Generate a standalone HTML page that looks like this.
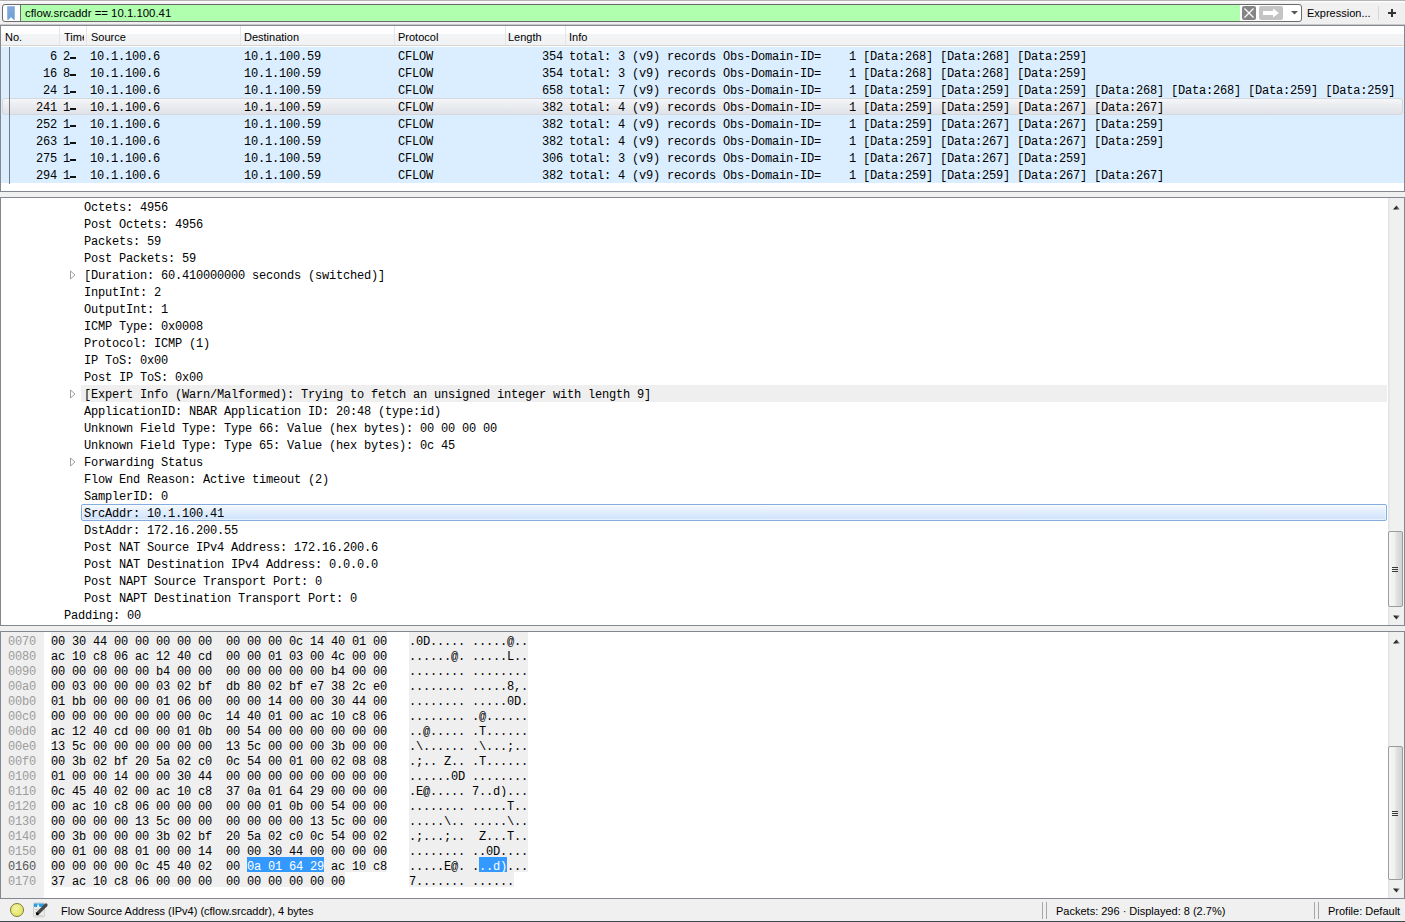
<!DOCTYPE html>
<html><head><meta charset="utf-8"><title>Wireshark</title><style>
*{margin:0;padding:0;box-sizing:border-box}
html,body{width:1405px;height:922px;overflow:hidden;background:#f0f0f0;position:relative;font-family:"Liberation Sans", sans-serif;}
.a{position:absolute}
.m{position:absolute;font-family:"Liberation Mono", monospace;font-size:12px;letter-spacing:-0.2px;white-space:pre;color:#000;line-height:17px}
.s{position:absolute;font-family:"Liberation Sans", sans-serif;font-size:11px;white-space:pre;color:#000;line-height:14px}
</style></head>
<body>
<div class="a" style="left:0;top:0;width:1405px;height:1px;background:#b4b4b4"></div>
<div class="a" style="left:0;top:1px;width:1405px;height:1px;background:#fdfdfd"></div>
<div class="a" style="left:0;top:2px;width:1405px;height:1px;background:#f6f6f6"></div>
<div class="a" style="left:2px;top:4px;width:1300px;height:18px;border:1px solid #6b6b6b;border-radius:3px;background:#fff"></div>
<div class="a" style="left:20px;top:5px;width:1px;height:16px;background:#6b6b6b"></div>
<div class="a" style="left:21px;top:5px;width:1219px;height:16px;background:#afffaf"></div>
<svg class="a" style="left:6px;top:5px" width="10" height="16" viewBox="0 0 10 16"><defs><linearGradient id="bm" x1="0" y1="0" x2="0.3" y2="1"><stop offset="0" stop-color="#86addb"/><stop offset="1" stop-color="#6c9fd4"/></linearGradient></defs><path d="M1.5 1.5 H8.5 V14.5 H7.5 L5 11.8 L2.5 14.5 H1.5 Z" fill="url(#bm)" stroke="#74a2d6" stroke-width="0.5"/></svg>
<div class="s" style="left:25px;top:6px;font-size:11.4px">cflow.srcaddr == 10.1.100.41</div>
<div class="a" style="left:1242px;top:6px;width:14px;height:14px;background:#848484;border-radius:2px"></div>
<svg class="a" style="left:1242px;top:6px" width="14" height="14" viewBox="0 0 14 14"><path d="M2.5 2.5 L11.5 11.5 M11.5 2.5 L2.5 11.5" stroke="#fff" stroke-width="1.2"/></svg>
<div class="a" style="left:1259px;top:6px;width:24px;height:14px;background:#c4c4c4;border-radius:2px"></div>
<svg class="a" style="left:1259px;top:6px" width="24" height="14" viewBox="0 0 24 14"><path d="M4 5 H14 V2.5 L20 7 L14 11.5 V9 H4 Z" fill="#fff"/></svg>
<svg class="a" style="left:1291px;top:11px" width="7" height="4" viewBox="0 0 7 4"><path d="M0 0 H7 L3.5 3.5 Z" fill="#555"/></svg>
<div class="s" style="left:1307px;top:6px">Expression...</div>
<div class="a" style="left:1378px;top:6px;width:1px;height:14px;background:#d8d8d8"></div>
<svg class="a" style="left:1387px;top:8px" width="10" height="10" viewBox="0 0 10 10"><path d="M5 1 V9 M1 5 H9" stroke="#333" stroke-width="2"/></svg>
<div class="a" style="left:0;top:24px;width:1405px;height:1px;background:#c8c8c8"></div>
<div class="a" style="left:0;top:25px;width:1405px;height:167px;border:1px solid #828790;background:#fff"></div>
<div class="a" style="left:1px;top:26px;width:1403px;height:19px;background:linear-gradient(#ffffff 0,#ffffff 8px,#f3f4f6 8px,#f1f2f4 19px)"></div>
<div class="a" style="left:1px;top:45px;width:1403px;height:1px;background:#d5d5d5"></div>
<div class="a" style="left:59px;top:26px;width:1px;height:19px;background:#e3e5e8"></div>
<div class="a" style="left:86px;top:26px;width:1px;height:19px;background:#e3e5e8"></div>
<div class="a" style="left:240px;top:26px;width:1px;height:19px;background:#e3e5e8"></div>
<div class="a" style="left:394px;top:26px;width:1px;height:19px;background:#e3e5e8"></div>
<div class="a" style="left:505px;top:26px;width:1px;height:19px;background:#e3e5e8"></div>
<div class="a" style="left:565px;top:26px;width:1px;height:19px;background:#e3e5e8"></div>
<div class="s" style="left:5px;top:30px">No.</div>
<div class="s" style="left:64px;top:30px;width:20px;overflow:hidden">Time</div>
<div class="s" style="left:91px;top:30px">Source</div>
<div class="s" style="left:244px;top:30px">Destination</div>
<div class="s" style="left:398px;top:30px">Protocol</div>
<div class="s" style="left:508px;top:30px">Length</div>
<div class="s" style="left:569px;top:30px">Info</div>
<div class="a" style="left:1px;top:47px;width:1403px;height:136px;background:#daeeff"></div>
<div class="a" style="left:2px;top:98px;width:1401px;height:17px;border:1px solid #d5d7da;border-radius:3px;background:linear-gradient(#f5f6f9,#e9ebef 50%,#dfe2e8)"></div>
<div class="a" style="left:9px;top:47px;width:1px;height:137px;background:#767b82"></div>
<div class="m" style="left:50px;top:49px">6</div>
<div class="m" style="left:63px;top:49px">2</div>
<div class="a" style="left:70px;top:57px;width:6px;height:2px;background:#111"></div>
<div class="m" style="left:90px;top:49px">10.1.100.6</div>
<div class="m" style="left:244px;top:49px">10.1.100.59</div>
<div class="m" style="left:398px;top:49px">CFLOW</div>
<div class="m" style="left:542px;top:49px">354</div>
<div class="m" style="left:569px;top:49px">total: 3 (v9) records Obs-Domain-ID=    1 [Data:268] [Data:268] [Data:259]</div>
<div class="m" style="left:43px;top:66px">16</div>
<div class="m" style="left:63px;top:66px">8</div>
<div class="a" style="left:70px;top:74px;width:6px;height:2px;background:#111"></div>
<div class="m" style="left:90px;top:66px">10.1.100.6</div>
<div class="m" style="left:244px;top:66px">10.1.100.59</div>
<div class="m" style="left:398px;top:66px">CFLOW</div>
<div class="m" style="left:542px;top:66px">354</div>
<div class="m" style="left:569px;top:66px">total: 3 (v9) records Obs-Domain-ID=    1 [Data:268] [Data:268] [Data:259]</div>
<div class="m" style="left:43px;top:83px">24</div>
<div class="m" style="left:63px;top:83px">1</div>
<div class="a" style="left:70px;top:91px;width:6px;height:2px;background:#111"></div>
<div class="m" style="left:90px;top:83px">10.1.100.6</div>
<div class="m" style="left:244px;top:83px">10.1.100.59</div>
<div class="m" style="left:398px;top:83px">CFLOW</div>
<div class="m" style="left:542px;top:83px">658</div>
<div class="m" style="left:569px;top:83px">total: 7 (v9) records Obs-Domain-ID=    1 [Data:259] [Data:259] [Data:259] [Data:268] [Data:268] [Data:259] [Data:259]</div>
<div class="m" style="left:36px;top:100px">241</div>
<div class="m" style="left:63px;top:100px">1</div>
<div class="a" style="left:70px;top:108px;width:6px;height:2px;background:#111"></div>
<div class="m" style="left:90px;top:100px">10.1.100.6</div>
<div class="m" style="left:244px;top:100px">10.1.100.59</div>
<div class="m" style="left:398px;top:100px">CFLOW</div>
<div class="m" style="left:542px;top:100px">382</div>
<div class="m" style="left:569px;top:100px">total: 4 (v9) records Obs-Domain-ID=    1 [Data:259] [Data:259] [Data:267] [Data:267]</div>
<div class="m" style="left:36px;top:117px">252</div>
<div class="m" style="left:63px;top:117px">1</div>
<div class="a" style="left:70px;top:125px;width:6px;height:2px;background:#111"></div>
<div class="m" style="left:90px;top:117px">10.1.100.6</div>
<div class="m" style="left:244px;top:117px">10.1.100.59</div>
<div class="m" style="left:398px;top:117px">CFLOW</div>
<div class="m" style="left:542px;top:117px">382</div>
<div class="m" style="left:569px;top:117px">total: 4 (v9) records Obs-Domain-ID=    1 [Data:259] [Data:267] [Data:267] [Data:259]</div>
<div class="m" style="left:36px;top:134px">263</div>
<div class="m" style="left:63px;top:134px">1</div>
<div class="a" style="left:70px;top:142px;width:6px;height:2px;background:#111"></div>
<div class="m" style="left:90px;top:134px">10.1.100.6</div>
<div class="m" style="left:244px;top:134px">10.1.100.59</div>
<div class="m" style="left:398px;top:134px">CFLOW</div>
<div class="m" style="left:542px;top:134px">382</div>
<div class="m" style="left:569px;top:134px">total: 4 (v9) records Obs-Domain-ID=    1 [Data:259] [Data:267] [Data:267] [Data:259]</div>
<div class="m" style="left:36px;top:151px">275</div>
<div class="m" style="left:63px;top:151px">1</div>
<div class="a" style="left:70px;top:159px;width:6px;height:2px;background:#111"></div>
<div class="m" style="left:90px;top:151px">10.1.100.6</div>
<div class="m" style="left:244px;top:151px">10.1.100.59</div>
<div class="m" style="left:398px;top:151px">CFLOW</div>
<div class="m" style="left:542px;top:151px">306</div>
<div class="m" style="left:569px;top:151px">total: 3 (v9) records Obs-Domain-ID=    1 [Data:267] [Data:267] [Data:259]</div>
<div class="m" style="left:36px;top:168px">294</div>
<div class="m" style="left:63px;top:168px">1</div>
<div class="a" style="left:70px;top:176px;width:6px;height:2px;background:#111"></div>
<div class="m" style="left:90px;top:168px">10.1.100.6</div>
<div class="m" style="left:244px;top:168px">10.1.100.59</div>
<div class="m" style="left:398px;top:168px">CFLOW</div>
<div class="m" style="left:542px;top:168px">382</div>
<div class="m" style="left:569px;top:168px">total: 4 (v9) records Obs-Domain-ID=    1 [Data:259] [Data:259] [Data:267] [Data:267]</div>
<div class="a" style="left:0;top:197px;width:1405px;height:429px;border:1px solid #828790;background:#fff"></div>
<div class="a" style="left:1388px;top:198px;width:16px;height:427px;background:linear-gradient(90deg,#e4e4e4 0,#e4e4e4 1px,#f0f0f0 2px)"></div>
<svg class="a" style="left:1393px;top:205px" width="8" height="5" viewBox="0 0 8 5"><defs><linearGradient id="ga198" x1="0" x2="1"><stop offset="0" stop-color="#111"/><stop offset="0.5" stop-color="#333"/><stop offset="1" stop-color="#aaa"/></linearGradient></defs><path d="M0 4.5 L3.5 0.5 L7 4.5 Z" fill="url(#ga198)"/></svg>
<svg class="a" style="left:1393px;top:615px" width="8" height="5" viewBox="0 0 8 5"><defs><linearGradient id="gb198" x1="0" x2="1"><stop offset="0" stop-color="#111"/><stop offset="0.5" stop-color="#333"/><stop offset="1" stop-color="#aaa"/></linearGradient></defs><path d="M0 0.5 L7 0.5 L3.5 4.5 Z" fill="url(#gb198)"/></svg>
<div class="a" style="left:1388px;top:531px;width:15px;height:76px;border:1px solid #9c9c9c;border-radius:2px;background:linear-gradient(90deg,#f6f6f6 0,#f0f0f0 45%,#e2e2e2 55%,#d2d2d2 100%)"></div>
<div class="a" style="left:1392px;top:567px;width:6px;height:1px;background:#3a3a3a"></div>
<div class="a" style="left:1392px;top:569px;width:6px;height:1px;background:#3a3a3a"></div>
<div class="a" style="left:1392px;top:571px;width:6px;height:1px;background:#3a3a3a"></div>
<div class="a" style="left:81px;top:385px;width:1306px;height:17px;background:#efefef"></div>
<div class="a" style="left:81px;top:504px;width:1306px;height:17px;border:1px solid #84acdd;border-radius:2px;background:linear-gradient(#f4f9fe,#e4effd 40%,#d3e6fc 85%,#cfe3fc);box-shadow:inset 0 0 0 1px rgba(255,255,255,0.5)"></div>
<div class="m" style="left:84px;top:200px">Octets: 4956</div>
<div class="m" style="left:84px;top:217px">Post Octets: 4956</div>
<div class="m" style="left:84px;top:234px">Packets: 59</div>
<div class="m" style="left:84px;top:251px">Post Packets: 59</div>
<svg class="a" style="left:69px;top:270px" width="8" height="10" viewBox="0 0 8 10"><path d="M1.5 1 L6 5 L1.5 9 Z" fill="none" stroke="#a0a0a0" stroke-width="1"/></svg>
<div class="m" style="left:84px;top:268px">[Duration: 60.410000000 seconds (switched)]</div>
<div class="m" style="left:84px;top:285px">InputInt: 2</div>
<div class="m" style="left:84px;top:302px">OutputInt: 1</div>
<div class="m" style="left:84px;top:319px">ICMP Type: 0x0008</div>
<div class="m" style="left:84px;top:336px">Protocol: ICMP (1)</div>
<div class="m" style="left:84px;top:353px">IP ToS: 0x00</div>
<div class="m" style="left:84px;top:370px">Post IP ToS: 0x00</div>
<svg class="a" style="left:69px;top:389px" width="8" height="10" viewBox="0 0 8 10"><path d="M1.5 1 L6 5 L1.5 9 Z" fill="none" stroke="#a0a0a0" stroke-width="1"/></svg>
<div class="m" style="left:84px;top:387px">[Expert Info (Warn/Malformed): Trying to fetch an unsigned integer with length 9]</div>
<div class="m" style="left:84px;top:404px">ApplicationID: NBAR Application ID: 20:48 (type:id)</div>
<div class="m" style="left:84px;top:421px">Unknown Field Type: Type 66: Value (hex bytes): 00 00 00 00</div>
<div class="m" style="left:84px;top:438px">Unknown Field Type: Type 65: Value (hex bytes): 0c 45</div>
<svg class="a" style="left:69px;top:457px" width="8" height="10" viewBox="0 0 8 10"><path d="M1.5 1 L6 5 L1.5 9 Z" fill="none" stroke="#a0a0a0" stroke-width="1"/></svg>
<div class="m" style="left:84px;top:455px">Forwarding Status</div>
<div class="m" style="left:84px;top:472px">Flow End Reason: Active timeout (2)</div>
<div class="m" style="left:84px;top:489px">SamplerID: 0</div>
<div class="m" style="left:84px;top:506px">SrcAddr: 10.1.100.41</div>
<div class="m" style="left:84px;top:523px">DstAddr: 172.16.200.55</div>
<div class="m" style="left:84px;top:540px">Post NAT Source IPv4 Address: 172.16.200.6</div>
<div class="m" style="left:84px;top:557px">Post NAT Destination IPv4 Address: 0.0.0.0</div>
<div class="m" style="left:84px;top:574px">Post NAPT Source Transport Port: 0</div>
<div class="m" style="left:84px;top:591px">Post NAPT Destination Transport Port: 0</div>
<div class="m" style="left:64px;top:608px">Padding: 00</div>
<div class="a" style="left:0;top:631px;width:1405px;height:268px;border:1px solid #828790;background:#fff"></div>
<div class="a" style="left:1px;top:632px;width:43px;height:266px;background:#efefef"></div>
<div class="a" style="left:1388px;top:632px;width:16px;height:266px;background:linear-gradient(90deg,#e4e4e4 0,#e4e4e4 1px,#f0f0f0 2px)"></div>
<svg class="a" style="left:1393px;top:639px" width="8" height="5" viewBox="0 0 8 5"><defs><linearGradient id="ga632" x1="0" x2="1"><stop offset="0" stop-color="#111"/><stop offset="0.5" stop-color="#333"/><stop offset="1" stop-color="#aaa"/></linearGradient></defs><path d="M0 4.5 L3.5 0.5 L7 4.5 Z" fill="url(#ga632)"/></svg>
<svg class="a" style="left:1393px;top:888px" width="8" height="5" viewBox="0 0 8 5"><defs><linearGradient id="gb632" x1="0" x2="1"><stop offset="0" stop-color="#111"/><stop offset="0.5" stop-color="#333"/><stop offset="1" stop-color="#aaa"/></linearGradient></defs><path d="M0 0.5 L7 0.5 L3.5 4.5 Z" fill="url(#gb632)"/></svg>
<div class="a" style="left:1388px;top:746px;width:15px;height:134px;border:1px solid #9c9c9c;border-radius:2px;background:linear-gradient(90deg,#f6f6f6 0,#f0f0f0 45%,#e2e2e2 55%,#d2d2d2 100%)"></div>
<div class="a" style="left:1392px;top:811px;width:6px;height:1px;background:#3a3a3a"></div>
<div class="a" style="left:1392px;top:813px;width:6px;height:1px;background:#3a3a3a"></div>
<div class="a" style="left:1392px;top:815px;width:6px;height:1px;background:#3a3a3a"></div>
<div class="m" style="left:8px;top:635px;line-height:15px;color:#9c9c9c">0070</div>
<div class="a" style="left:51px;top:632px;width:336px;height:15px;background:#efefef"></div>
<div class="a" style="left:409px;top:632px;width:119px;height:15px;background:#efefef"></div>
<div class="m" style="left:51px;top:635px;line-height:15px">00 30 44 00 00 00 00 00  00 00 00 0c 14 40 01 00</div>
<div class="m" style="left:409px;top:635px;line-height:15px">.0D..... .....@..</div>
<div class="m" style="left:8px;top:650px;line-height:15px;color:#9c9c9c">0080</div>
<div class="a" style="left:51px;top:647px;width:336px;height:15px;background:#efefef"></div>
<div class="a" style="left:409px;top:647px;width:119px;height:15px;background:#efefef"></div>
<div class="m" style="left:51px;top:650px;line-height:15px">ac 10 c8 06 ac 12 40 cd  00 00 01 03 00 4c 00 00</div>
<div class="m" style="left:409px;top:650px;line-height:15px">......@. .....L..</div>
<div class="m" style="left:8px;top:665px;line-height:15px;color:#9c9c9c">0090</div>
<div class="a" style="left:51px;top:662px;width:336px;height:15px;background:#efefef"></div>
<div class="a" style="left:409px;top:662px;width:119px;height:15px;background:#efefef"></div>
<div class="m" style="left:51px;top:665px;line-height:15px">00 00 00 00 00 b4 00 00  00 00 00 00 00 b4 00 00</div>
<div class="m" style="left:409px;top:665px;line-height:15px">........ ........</div>
<div class="m" style="left:8px;top:680px;line-height:15px;color:#9c9c9c">00a0</div>
<div class="a" style="left:51px;top:677px;width:336px;height:15px;background:#efefef"></div>
<div class="a" style="left:409px;top:677px;width:119px;height:15px;background:#efefef"></div>
<div class="m" style="left:51px;top:680px;line-height:15px">00 03 00 00 00 03 02 bf  db 80 02 bf e7 38 2c e0</div>
<div class="m" style="left:409px;top:680px;line-height:15px">........ .....8,.</div>
<div class="m" style="left:8px;top:695px;line-height:15px;color:#9c9c9c">00b0</div>
<div class="a" style="left:51px;top:692px;width:336px;height:15px;background:#efefef"></div>
<div class="a" style="left:409px;top:692px;width:119px;height:15px;background:#efefef"></div>
<div class="m" style="left:51px;top:695px;line-height:15px">01 bb 00 00 00 01 06 00  00 00 14 00 00 30 44 00</div>
<div class="m" style="left:409px;top:695px;line-height:15px">........ .....0D.</div>
<div class="m" style="left:8px;top:710px;line-height:15px;color:#9c9c9c">00c0</div>
<div class="a" style="left:51px;top:707px;width:336px;height:15px;background:#efefef"></div>
<div class="a" style="left:409px;top:707px;width:119px;height:15px;background:#efefef"></div>
<div class="m" style="left:51px;top:710px;line-height:15px">00 00 00 00 00 00 00 0c  14 40 01 00 ac 10 c8 06</div>
<div class="m" style="left:409px;top:710px;line-height:15px">........ .@......</div>
<div class="m" style="left:8px;top:725px;line-height:15px;color:#9c9c9c">00d0</div>
<div class="a" style="left:51px;top:722px;width:336px;height:15px;background:#efefef"></div>
<div class="a" style="left:409px;top:722px;width:119px;height:15px;background:#efefef"></div>
<div class="m" style="left:51px;top:725px;line-height:15px">ac 12 40 cd 00 00 01 0b  00 54 00 00 00 00 00 00</div>
<div class="m" style="left:409px;top:725px;line-height:15px">..@..... .T......</div>
<div class="m" style="left:8px;top:740px;line-height:15px;color:#9c9c9c">00e0</div>
<div class="a" style="left:51px;top:737px;width:336px;height:15px;background:#efefef"></div>
<div class="a" style="left:409px;top:737px;width:119px;height:15px;background:#efefef"></div>
<div class="m" style="left:51px;top:740px;line-height:15px">13 5c 00 00 00 00 00 00  13 5c 00 00 00 3b 00 00</div>
<div class="m" style="left:409px;top:740px;line-height:15px">.\...... .\...;..</div>
<div class="m" style="left:8px;top:755px;line-height:15px;color:#9c9c9c">00f0</div>
<div class="a" style="left:51px;top:752px;width:336px;height:15px;background:#efefef"></div>
<div class="a" style="left:409px;top:752px;width:119px;height:15px;background:#efefef"></div>
<div class="m" style="left:51px;top:755px;line-height:15px">00 3b 02 bf 20 5a 02 c0  0c 54 00 01 00 02 08 08</div>
<div class="m" style="left:409px;top:755px;line-height:15px">.;.. Z.. .T......</div>
<div class="m" style="left:8px;top:770px;line-height:15px;color:#9c9c9c">0100</div>
<div class="a" style="left:51px;top:767px;width:336px;height:15px;background:#efefef"></div>
<div class="a" style="left:409px;top:767px;width:119px;height:15px;background:#efefef"></div>
<div class="m" style="left:51px;top:770px;line-height:15px">01 00 00 14 00 00 30 44  00 00 00 00 00 00 00 00</div>
<div class="m" style="left:409px;top:770px;line-height:15px">......0D ........</div>
<div class="m" style="left:8px;top:785px;line-height:15px;color:#9c9c9c">0110</div>
<div class="a" style="left:51px;top:782px;width:336px;height:15px;background:#efefef"></div>
<div class="a" style="left:409px;top:782px;width:119px;height:15px;background:#efefef"></div>
<div class="m" style="left:51px;top:785px;line-height:15px">0c 45 40 02 00 ac 10 c8  37 0a 01 64 29 00 00 00</div>
<div class="m" style="left:409px;top:785px;line-height:15px">.E@..... 7..d)...</div>
<div class="m" style="left:8px;top:800px;line-height:15px;color:#9c9c9c">0120</div>
<div class="a" style="left:51px;top:797px;width:336px;height:15px;background:#efefef"></div>
<div class="a" style="left:409px;top:797px;width:119px;height:15px;background:#efefef"></div>
<div class="m" style="left:51px;top:800px;line-height:15px">00 ac 10 c8 06 00 00 00  00 00 01 0b 00 54 00 00</div>
<div class="m" style="left:409px;top:800px;line-height:15px">........ .....T..</div>
<div class="m" style="left:8px;top:815px;line-height:15px;color:#9c9c9c">0130</div>
<div class="a" style="left:51px;top:812px;width:336px;height:15px;background:#efefef"></div>
<div class="a" style="left:409px;top:812px;width:119px;height:15px;background:#efefef"></div>
<div class="m" style="left:51px;top:815px;line-height:15px">00 00 00 00 13 5c 00 00  00 00 00 00 13 5c 00 00</div>
<div class="m" style="left:409px;top:815px;line-height:15px">.....\.. .....\..</div>
<div class="m" style="left:8px;top:830px;line-height:15px;color:#9c9c9c">0140</div>
<div class="a" style="left:51px;top:827px;width:336px;height:15px;background:#efefef"></div>
<div class="a" style="left:409px;top:827px;width:119px;height:15px;background:#efefef"></div>
<div class="m" style="left:51px;top:830px;line-height:15px">00 3b 00 00 00 3b 02 bf  20 5a 02 c0 0c 54 00 02</div>
<div class="m" style="left:409px;top:830px;line-height:15px">.;...;..  Z...T..</div>
<div class="m" style="left:8px;top:845px;line-height:15px;color:#9c9c9c">0150</div>
<div class="a" style="left:51px;top:842px;width:336px;height:15px;background:#efefef"></div>
<div class="a" style="left:409px;top:842px;width:119px;height:15px;background:#efefef"></div>
<div class="m" style="left:51px;top:845px;line-height:15px">00 01 00 08 01 00 00 14  00 00 30 44 00 00 00 00</div>
<div class="m" style="left:409px;top:845px;line-height:15px">........ ..0D....</div>
<div class="m" style="left:8px;top:860px;line-height:15px;color:#555">0160</div>
<div class="a" style="left:51px;top:857px;width:336px;height:15px;background:#efefef"></div>
<div class="a" style="left:409px;top:857px;width:119px;height:15px;background:#efefef"></div>
<div class="a" style="left:247px;top:857px;width:77px;height:15px;background:#3399ff"></div>
<div class="a" style="left:479px;top:857px;width:28px;height:15px;background:#3399ff"></div>
<div class="m" style="left:51px;top:860px;line-height:15px">00 00 00 00 0c 45 40 02  00<span style="color:#fff"> 0a 01 64 29</span> ac 10 c8</div>
<div class="m" style="left:409px;top:860px;line-height:15px">.....E@. .<span style="color:#fff">..d)</span>...</div>
<div class="m" style="left:8px;top:875px;line-height:15px;color:#9c9c9c">0170</div>
<div class="a" style="left:51px;top:872px;width:294px;height:15px;background:#efefef"></div>
<div class="a" style="left:409px;top:872px;width:105px;height:15px;background:#efefef"></div>
<div class="m" style="left:51px;top:875px;line-height:15px">37 ac 10 c8 06 00 00 00  00 00 00 00 00 00</div>
<div class="m" style="left:409px;top:875px;line-height:15px">7....... ......</div>
<div class="a" style="left:0;top:921px;width:1405px;height:1px;background:#3c4550"></div>
<div class="a" style="left:10px;top:903px;width:14px;height:14px;border-radius:50%;border:1px solid #7c7c34;background:radial-gradient(circle at 40% 35%,#f4f4a0,#dede55)"></div>
<svg class="a" style="left:33px;top:902px" width="16" height="16" viewBox="0 0 16 16"><rect x="0.5" y="1" width="11" height="14" rx="1" fill="#ecece8" stroke="#cfcfc8"/><rect x="1" y="1.5" width="10" height="3.5" fill="#2d9fe0"/><path d="M5 1.5 L6.5 5 L4 5 Z" fill="#fff"/><rect x="2" y="7" width="3" height="1" fill="#cfcfcf"/><rect x="2" y="10" width="2" height="1" fill="#cfcfcf"/><rect x="2" y="13" width="8" height="1" fill="#d0d0d0"/><path d="M4.5 11.5 L13 3" stroke="#484848" stroke-width="3.2" stroke-linecap="round"/><circle cx="4.3" cy="11.7" r="1.3" fill="#000"/></svg>
<div class="s" style="left:61px;top:904px">Flow Source Address (IPv4) (cflow.srcaddr), 4 bytes</div>
<div class="a" style="left:1042px;top:902px;width:1px;height:17px;background:#a8a8a8"></div>
<div class="a" style="left:1046px;top:902px;width:1px;height:17px;background:#a8a8a8"></div>
<div class="s" style="left:1056px;top:904px">Packets: 296 · Displayed: 8 (2.7%)</div>
<div class="a" style="left:1314px;top:902px;width:1px;height:17px;background:#a8a8a8"></div>
<div class="a" style="left:1318px;top:902px;width:1px;height:17px;background:#a8a8a8"></div>
<div class="s" style="left:1328px;top:904px">Profile: Default</div>
</body></html>
